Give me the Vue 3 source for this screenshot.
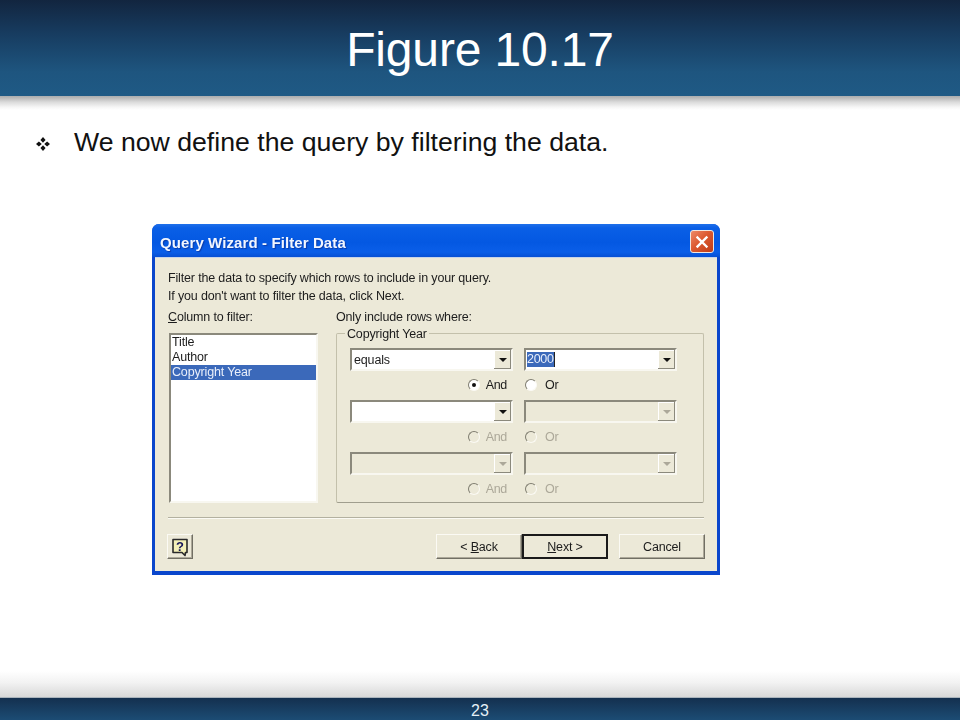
<script setup>
const rows = [
  { first: 'equals', second: '2000', firstOn: true, secondOn: true, radiosOn: true },
  { first: '', second: '', firstOn: true, secondOn: false, radiosOn: false },
  { first: '', second: '', firstOn: false, secondOn: false, radiosOn: false }
]
</script>

<template>
  <div class="slide">
    <header class="top">
      <h1>Figure 10.17</h1>
    </header>
    <div class="top-edge"></div>

    <main class="content">
      <div class="bullet-line">
        <svg class="bullet" width="14" height="14" viewBox="0 0 14 14" aria-hidden="true">
          <path d="M7 0 9.6 2.9 7 5.8 4.4 2.9zM7 8.2 9.6 11.1 7 14 4.4 11.1zM2.9 4.4 5.8 7 2.9 9.6 0 7zM11.1 4.4 14 7 11.1 9.6 8.2 7z" fill="#111" />
        </svg>
        <p>We now define the query by filtering the data.</p>
      </div>

      <section class="dialog">
        <div class="titlebar">
          <span class="title-text">Query Wizard - Filter Data</span>
          <button class="close" tabindex="-1">
            <svg width="14" height="14" viewBox="0 0 14 14" aria-hidden="true">
              <path d="M2.5 2.5 11.5 11.5M11.5 2.5 2.5 11.5" stroke="#fff" stroke-width="2.4" stroke-linecap="square" />
            </svg>
          </button>
        </div>

        <div class="body">
          <p class="line">Filter the data to specify which rows to include in your query.</p>
          <p class="line">If you don't want to filter the data, click Next.</p>

          <div class="labels">
            <span class="col-label"><u>C</u>olumn to filter:</span>
            <span>Only include rows where:</span>
          </div>

          <div class="panes">
            <ul class="listbox">
              <li>Title</li>
              <li>Author</li>
              <li class="selected">Copyright Year</li>
            </ul>

            <div class="group">
              <span class="legend">Copyright Year</span>
              <template v-for="(row, i) in rows" :key="i">
                <div class="combo-row">
                  <div class="combo" :class="{ off: !row.firstOn }">
                    <span class="value">{{ row.first }}</span>
                    <span class="arrow"><i></i></span>
                  </div>
                  <div class="combo" :class="{ off: !row.secondOn }">
                    <span class="value"><mark v-if="row.second">{{ row.second }}</mark></span>
                    <span class="arrow"><i></i></span>
                  </div>
                </div>
                <div class="radio-row" :class="{ off: !row.radiosOn }">
                  <label class="radio and"><span class="dot" :class="{ on: i === 0 }"></span>And</label>
                  <label class="radio or"><span class="dot"></span>Or</label>
                </div>
              </template>
            </div>
          </div>

          <div class="separator"></div>

          <div class="actions">
            <button class="btn help" tabindex="-1">
              <svg width="20" height="20" viewBox="0 0 20 20" aria-hidden="true">
                <path d="M3 2.5H17V15.5H15.5L15 18.5 12 15.5H3z" fill="#f4f0b8" stroke="#2a2a2a" stroke-width="1.6" stroke-linejoin="round" />
                <text x="10" y="13.5" text-anchor="middle" class="qmark">?</text>
              </svg>
            </button>
            <div class="nav">
              <button class="btn wide" tabindex="-1">&lt; <u>B</u>ack</button>
              <button class="btn wide default" tabindex="-1"><u>N</u>ext &gt;</button>
              <button class="btn wide cancel" tabindex="-1">Cancel</button>
            </div>
          </div>
        </div>
      </section>
    </main>

    <div class="bottom-fade"></div>
    <footer class="bottom">23</footer>
  </div>
</template>

<style scoped>
.slide {
  width: 960px;
  height: 720px;
  display: flex;
  flex-direction: column;
  background: #fff;
  overflow: hidden;
  font-family: "Liberation Sans", Arial, sans-serif;
}
.top {
  height: 96px;
  box-sizing: border-box;
  padding-top: 3px;
  flex: none;
  display: flex;
  align-items: center;
  justify-content: center;
  background: linear-gradient(180deg, #12253f 0%, #173c60 35%, #1e557f 75%, #1f5a85 100%);
}
.top h1 {
  margin: 0;
  color: #fff;
  font-size: 48px;
  font-weight: 400;
  line-height: 1;
  letter-spacing: -0.15px;
}
.top-edge {
  height: 14px;
  flex: none;
  background: linear-gradient(180deg, #a9adb0 0%, #b5b5b5 10%, #dcdcdc 45%, #f6f6f6 80%, #fff 100%);
}
.content {
  flex: 1;
  min-height: 0;
  display: flex;
  flex-direction: column;
}
.bullet-line {
  display: flex;
  align-items: center;
  height: 36px;
  margin-top: 14px;
  padding-left: 36px;
}
.bullet {
  flex: none;
  margin: 4px 24px 0 0;
}
.bullet-line p {
  margin: 0;
  color: #111;
  font-size: 26.67px;
  line-height: 36px;
}

.dialog {
  width: 568px;
  height: 351px;
  box-sizing: border-box;
  margin: 64px 0 0 152px;
  display: flex;
  flex-direction: column;
  background: #0a46cc;
  border-radius: 7px 7px 0 0;
  padding: 0 3px 4px;
  color: #1c1c1c;
  font-size: 12.5px;
  filter: blur(0.3px);
}
.titlebar {
  height: 33px;
  flex: none;
  margin: 0 -3px;
  padding: 2px 6px 0 8px;
  box-sizing: border-box;
  display: flex;
  align-items: center;
  justify-content: space-between;
  border-radius: 7px 7px 0 0;
  background: linear-gradient(180deg, #1f70ea 0%, #0a5fe6 12%, #0458e2 55%, #0a5ee8 85%, #0650d4 100%);
}
.title-text {
  margin-top: 2px;
  color: #f2f6ff;
  font-weight: 700;
  font-size: 15px;
  letter-spacing: 0.1px;
  text-shadow: 1px 1px 1px #0a3aa8;
}
.close {
  width: 24px;
  height: 23px;
  padding: 0;
  display: flex;
  align-items: center;
  justify-content: center;
  border: 1px solid #f0e8e0;
  border-radius: 3px;
  background: linear-gradient(135deg, #ee8a68 0%, #dc5a30 45%, #bf3c18 100%);
}
.body {
  flex: 1;
  min-height: 0;
  background: #ece9d8;
  border-top: 1px solid #c8d4e8;
  padding: 11px 12px 0 13px;
  display: flex;
  flex-direction: column;
}
.line {
  margin: 0;
  line-height: 18px;
  letter-spacing: -0.16px;
}
.labels {
  display: grid;
  grid-template-columns: 168px 1fr;
  margin-top: 3px;
  line-height: 18px;
  letter-spacing: -0.16px;
}
.panes {
  display: flex;
  gap: 18px;
  margin: 7px 0 0 1px;
  height: 170px;
  flex: none;
}
.listbox {
  width: 149px;
  box-sizing: border-box;
  margin: 0;
  padding: 0;
  list-style: none;
  background: #fff;
  border-style: solid;
  border-width: 2px;
  border-color: #8b897c #f8f7f0 #f8f7f0 #8b897c;
}
.listbox li {
  height: 15px;
  line-height: 15px;
  padding-left: 1px;
  letter-spacing: -0.16px;
}
.listbox .selected {
  background: #3b69ba;
  color: #e8eefa;
}
.group {
  position: relative;
  width: 368px;
  box-sizing: border-box;
  border: 1px solid #c3c0ab;
  border-bottom-color: #a09e8e;
  border-radius: 2px;
  padding: 14px 0 0 13px;
}
.legend {
  position: absolute;
  top: -7px;
  left: 8px;
  padding: 0 2px;
  background: #ece9d8;
  line-height: 15px;
  letter-spacing: -0.16px;
}
.combo-row,
.radio-row {
  display: grid;
  grid-template-columns: 163px 153px;
  column-gap: 11px;
}
.combo {
  height: 23px;
  box-sizing: border-box;
  display: flex;
  align-items: stretch;
  border-style: solid;
  border-width: 2px;
  border-color: #8b897c #f8f7f0 #f8f7f0 #8b897c;
  background: #fff;
}
.combo.off {
  background: #ece9d8;
}
.value {
  flex: 1;
  padding-left: 2px;
  line-height: 21px;
  letter-spacing: -0.16px;
}
mark {
  display: inline-block;
  height: 15px;
  line-height: 15px;
  padding: 0;
  margin: 2px 0 0 -1px;
  vertical-align: top;
  background: #3b69ba;
  color: #e8eefa;
  border-right: 1px solid #222;
  letter-spacing: -0.3px;
}
.arrow {
  width: 17px;
  flex: none;
  display: flex;
  align-items: center;
  justify-content: center;
  background: #ece9d8;
  box-shadow: inset -1px -1px 0 #8b897c, inset 1px 1px 0 #fff;
}
.arrow i {
  width: 0;
  height: 0;
  border-style: solid;
  border-width: 4px 4px 0;
  border-color: #111 transparent transparent;
}
.off .arrow i {
  border-top-color: #aca899;
}
.radio-row {
  height: 29px;
  box-sizing: border-box;
  padding-bottom: 2px;
  align-items: center;
  letter-spacing: -0.3px;
}
.radio {
  display: flex;
  align-items: center;
  gap: 6px;
}
.radio.and {
  justify-content: flex-end;
  padding-right: 6px;
}
.radio.or {
  padding-left: 1px;
  gap: 8px;
}
.radio-row.off {
  color: #aca899;
}
.dot {
  width: 12px;
  height: 12px;
  box-sizing: border-box;
  flex: none;
  display: flex;
  align-items: center;
  justify-content: center;
  border-radius: 50%;
  border: 1.5px solid;
  border-color: #7f7d70 #fbfaf4 #fbfaf4 #7f7d70;
  background: #fff;
}
.radio-row.off .dot {
  background: #ece9d8;
}
.dot.on::after {
  content: "";
  width: 4px;
  height: 4px;
  border-radius: 50%;
  background: #111;
}
.separator {
  height: 2px;
  flex: none;
  margin: 14px 1px 0 0;
  background: linear-gradient(180deg, #b3b1a0 50%, #fbfaf4 50%);
}
.actions {
  display: flex;
  justify-content: space-between;
  align-items: flex-start;
  margin: 15px 0 0 -1px;
}
.nav {
  display: flex;
}
.btn {
  height: 25px;
  padding: 0;
  font: inherit;
  color: inherit;
  letter-spacing: -0.16px;
  background: #ece9d8;
  border-style: solid;
  border-width: 1px;
  border-color: #fbfaf4 #716f64 #716f64 #fbfaf4;
  box-shadow: inset -1px -1px 0 #aca899;
}
.help {
  width: 26px;
  display: flex;
  align-items: center;
  justify-content: center;
}
.qmark {
  font-family: "Liberation Sans", Arial, sans-serif;
  font-weight: 700;
  font-size: 13px;
  fill: #14145a;
}
.wide {
  width: 86px;
}
.default {
  border: 2px solid #1a1a1a;
  box-shadow: none;
}
.cancel {
  margin-left: 11px;
}
.bottom-fade {
  height: 26px;
  flex: none;
  background: linear-gradient(180deg, #fff 0%, #f2f2f2 45%, #d8d8d8 100%);
  border-bottom: 1px solid #aab4bc;
}
.bottom {
  height: 22px;
  box-sizing: border-box;
  padding-top: 3px;
  flex: none;
  display: flex;
  align-items: center;
  justify-content: center;
  color: #e6f0f6;
  font-size: 16px;
  background: linear-gradient(180deg, #14304f 0%, #1c4c74 100%);
}
</style>
